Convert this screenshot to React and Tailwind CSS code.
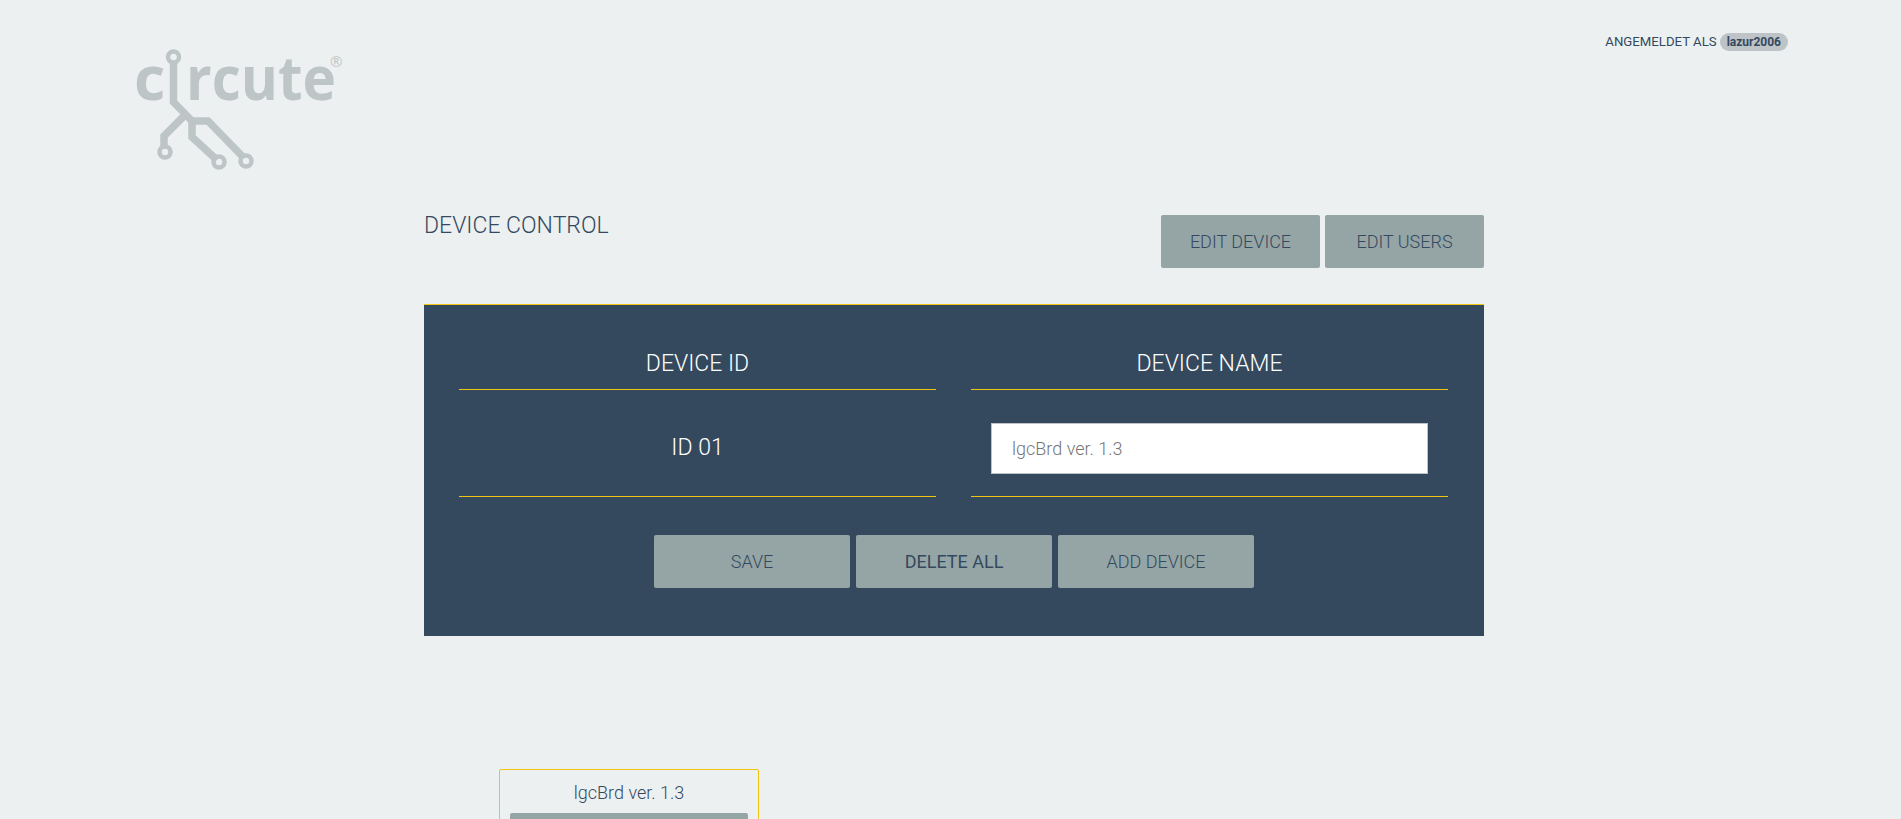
const Logo = () => (
  <svg width="240" height="140" viewBox="0 0 240 140" fill="none">
    <g fill="#bdc5c6" fontFamily="'Open Sans', sans-serif" fontWeight="700" fontSize="61">
      <text x="14" y="60">c</text>
      <text x="66" y="60" textLength="150" lengthAdjust="spacingAndGlyphs">rcute</text>
      <text x="210" y="27" fontSize="15" fontWeight="400">®</text>
    </g>
    <g stroke="#bdc5c6" strokeWidth="7.5">
      <path d="M53.5 22V62L72 81" />
      <path d="M65 75L44 96V107" />
      <path d="M72 81H88L124 118" />
      <path d="M72 81V97L97 120" />
      <circle cx="53.5" cy="17" r="5.5" strokeWidth="4.5" />
      <circle cx="45" cy="112" r="5.5" strokeWidth="4.5" />
      <circle cx="99" cy="122" r="5.5" strokeWidth="4.5" />
      <circle cx="126" cy="121" r="5.5" strokeWidth="4.5" />
    </g>
  </svg>
)

const GreyButton = ({ children, className = "font-light" }) => (
  <button className={`h-[53px] w-full rounded-[2px] bg-[#95a5a6] text-[#34495e] text-[18px] ${className}`}>
    {children}
  </button>
)

const App = () => {
  return (
    <div className="h-screen overflow-hidden bg-[#ecf0f1] text-[#34495e] font-['Roboto',sans-serif]">
      <header className="flex justify-between h-[215px] pl-[120px] pr-[113px] pt-[40px]">
        <Logo />
        <div className="flex items-center h-[4px] text-[13.2px] font-normal">
          <span className="mr-[3px]">ANGEMELDET ALS</span>
          <span className="px-[7px] rounded-full bg-[#bdc3c7] font-bold text-[12px] leading-[18px]">lazur2006</span>
        </div>
      </header>

      <main className="ml-[424px] w-[1060px]">
        <div className="flex justify-between h-[89px]">
          <h1 className="text-[23px] font-light leading-[26px] mt-[-2px]">DEVICE CONTROL</h1>
          <div className="flex gap-[5px]">
            <div className="w-[159px]"><GreyButton>EDIT DEVICE</GreyButton></div>
            <div className="w-[159px]"><GreyButton>EDIT USERS</GreyButton></div>
          </div>
        </div>

        <section className="h-[332px] border-t border-[#f1c40f] bg-[#34495e] px-[35px]">
          <div className="grid grid-cols-[477px_477px] gap-x-[35px]">
            <div className="flex flex-col">
              <div className="h-[85px] border-b border-[#f1c40f] pt-[46px] text-center text-[23px] font-light leading-[26px] text-white">
                DEVICE ID
              </div>
              <div className="flex h-[107px] items-center justify-center border-b border-[#f1c40f] pt-[11px] text-[23px] font-light text-white">
                ID 01
              </div>
            </div>
            <div className="flex flex-col">
              <div className="h-[85px] border-b border-[#f1c40f] pt-[46px] text-center text-[23px] font-light leading-[26px] text-white">
                DEVICE NAME
              </div>
              <div className="flex h-[107px] items-center justify-center border-b border-[#f1c40f] pt-[11px]">
                <input
                  readOnly
                  value="lgcBrd ver. 1.3"
                  className="h-[51px] w-[437px] border border-[#bdc3c7] bg-white px-[20px] text-[18px] font-light text-[#757575] outline-none"
                />
              </div>
            </div>
          </div>
          <div className="mt-[38px] flex justify-center gap-[6px]">
            <div className="w-[196px]"><GreyButton>SAVE</GreyButton></div>
            <div className="w-[196px]"><GreyButton className="font-normal">DELETE ALL</GreyButton></div>
            <div className="w-[196px]"><GreyButton>ADD DEVICE</GreyButton></div>
          </div>
        </section>

        <div className="ml-[75px] mt-[133px] w-[260px] rounded-[2px] border border-[#f1c40f] px-[10px] pt-[12px]">
          <p className="text-center text-[18px] font-light leading-[22px] mb-[9px]">lgcBrd ver. 1.3</p>
          <GreyButton>EDIT</GreyButton>
        </div>
      </main>
    </div>
  )
}

export default App
